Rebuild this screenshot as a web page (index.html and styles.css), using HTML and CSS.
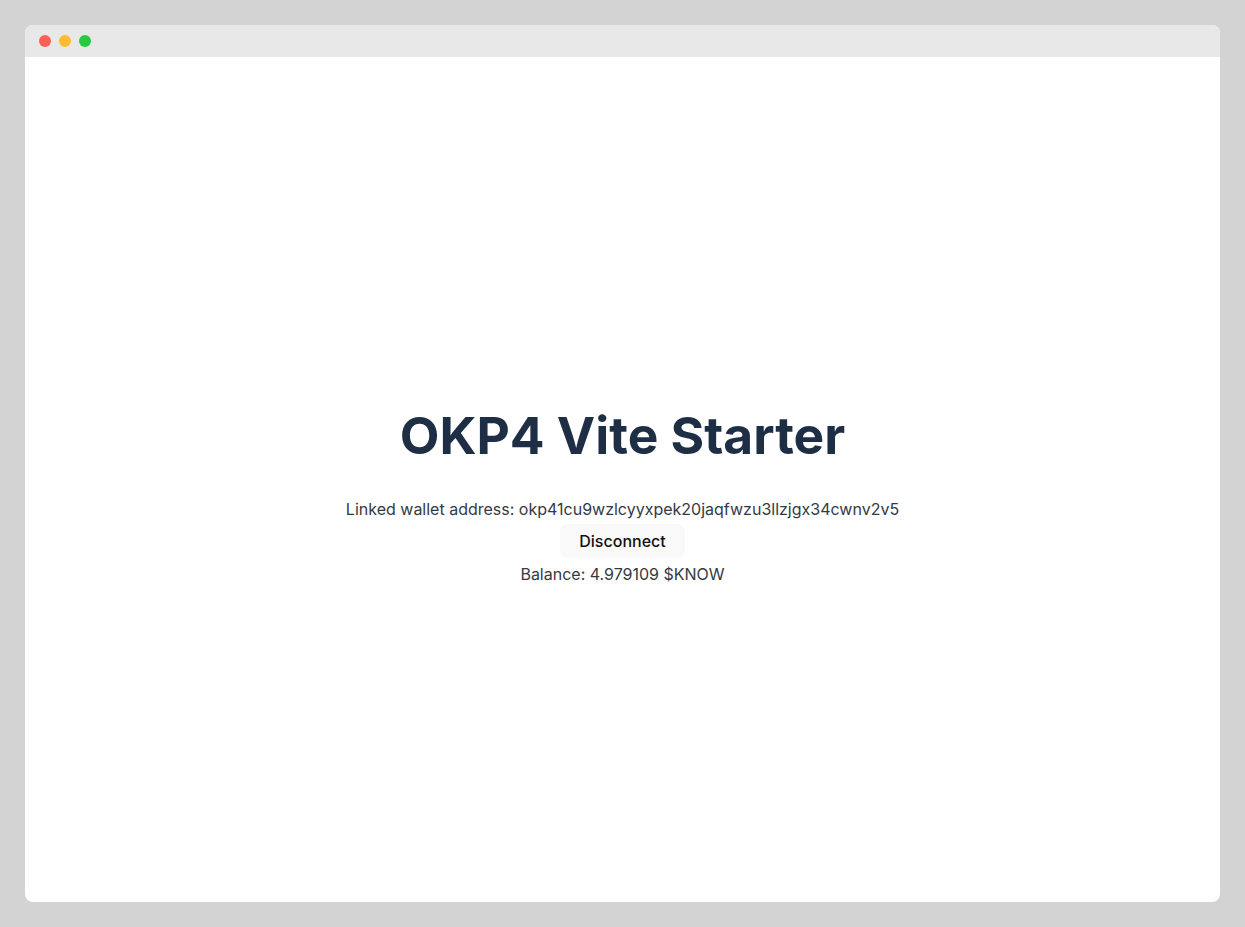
FILE: index.html
```html
<!DOCTYPE html>
<html>
<head>
<meta charset="utf-8">
<link rel="stylesheet" href="styles.css">
</head>
<body>
<div class="window">
  <div class="titlebar">
    <span class="dot red"></span>
    <span class="dot yellow"></span>
    <span class="dot green"></span>
  </div>
  <main class="content">
    <h1 class="title">OKP4 Vite Starter</h1>
    <p class="line">Linked wallet address: okp41cu9wzlcyyxpek20jaqfwzu3llzjgx34cwnv2v5</p>
    <button class="btn">Disconnect</button>
    <p class="line">Balance: 4.979109 $KNOW</p>
  </main>
</div>
</body>
</html>
```
FILE: styles.css
```css
html, body {
  margin: 0;
  padding: 0;
}
body {
  background: #d3d3d3;
  width: 1245px;
  height: 927px;
  padding: 25px;
  box-sizing: border-box;
  font-family: Inter, "Noto Sans", sans-serif;
}
.window {
  width: 1195px;
  height: 877px;
  background: #ffffff;
  border-radius: 8px;
  overflow: hidden;
  display: flex;
  flex-direction: column;
}
.titlebar {
  height: 32px;
  background: #e8e8e8;
  display: flex;
  align-items: center;
  gap: 8px;
  padding-left: 14px;
  flex-shrink: 0;
}
.dot {
  width: 12px;
  height: 12px;
  border-radius: 50%;
}
.red { background: #fe5f57; }
.yellow { background: #febc2e; }
.green { background: #28c840; }
.content {
  flex: 1;
  display: flex;
  flex-direction: column;
  align-items: center;
  justify-content: center;
  padding-top: 30px;
  color: #343a44;
}
.title {
  font-size: 51.5px;
  font-weight: 700;
  color: #1e2f45;
  margin: 0 0 31px;
  line-height: 62px;
}
.line {
  margin: 0;
  font-size: 16px;
  line-height: 24px;
}
.btn {
  font-family: inherit;
  font-size: 16px;
  font-weight: 500;
  color: #111;
  background: #f9f9f9;
  border: none;
  border-radius: 8px;
  padding: 5px 19px;
  margin: 3px 0 4px;
  line-height: 24px;
  cursor: pointer;
}
```
